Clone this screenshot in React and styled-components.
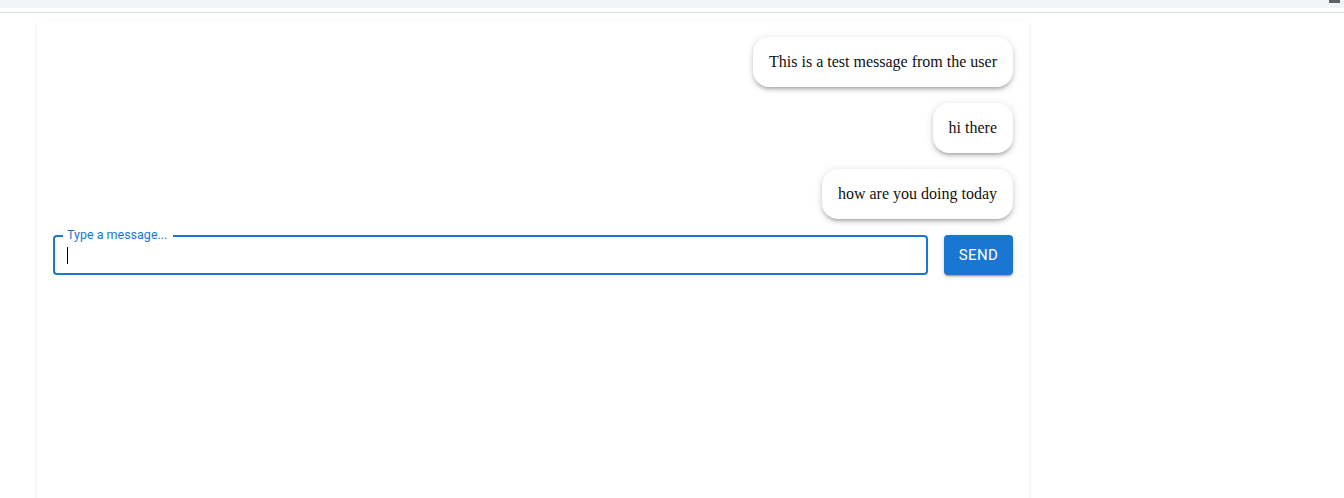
import React from "react";
import styled, { createGlobalStyle } from "styled-components";

const GlobalStyle = createGlobalStyle`
  html, body {
    margin: 0;
    padding: 0;
    background: #fff;
  }
  body {
    font-family: "Liberation Serif", "Times New Roman", serif;
  }
`;

const messages = [
  "This is a test message from the user",
  "hi there",
  "how are you doing today",
];

export default function App() {
  return (
    <>
      <GlobalStyle />
      <TopStrip>
        <StripMark />
      </TopStrip>
      <Divider />
      <Page>
        <ChatCard>
          <MessageList>
            {messages.map((m) => (
              <Bubble key={m}>{m}</Bubble>
            ))}
          </MessageList>
          <Composer>
            <Field>
              <FieldLabel>Type a message...</FieldLabel>
              <FieldInput aria-label="Type a message..." />
              <Caret />
            </Field>
            <SendButton>Send</SendButton>
          </Composer>
        </ChatCard>
      </Page>
    </>
  );
}

const TopStrip = styled.div`
  height: 8px;
  background: #f1f3f4;
  position: relative;
`;

const StripMark = styled.span`
  position: absolute;
  right: 4px;
  top: 0;
  width: 11px;
  height: 3px;
  background: #5f6368;
`;

const Divider = styled.div`
  margin-top: 4px;
  height: 1px;
  background: #dadce0;
`;

const Page = styled.main`
  padding: 8px 0 0 37px;
`;

const ChatCard = styled.section`
  width: 992px;
  min-height: 500px;
  box-sizing: border-box;
  padding: 16px;
  border-radius: 4px;
  background: #fff;
  box-shadow: 0 2px 1px -1px rgba(0, 0, 0, 0.12), 0 1px 1px 0 rgba(0, 0, 0, 0.08),
    0 1px 3px 0 rgba(0, 0, 0, 0.1);
`;

const MessageList = styled.div`
  display: flex;
  flex-direction: column;
  align-items: flex-end;
  gap: 16px;
`;

const Bubble = styled.div`
  padding: 16px;
  border-radius: 16px;
  background: #fff;
  color: #111;
  font-size: 16px;
  line-height: 18px;
  box-shadow: 0 3px 3px -2px rgba(0, 0, 0, 0.2), 0 3px 4px 0 rgba(0, 0, 0, 0.14),
    0 1px 8px 0 rgba(0, 0, 0, 0.12);
`;

const Composer = styled.div`
  display: flex;
  gap: 16px;
  margin-top: 16px;
  align-items: stretch;
`;

const Field = styled.label`
  flex: 1;
  position: relative;
  height: 40px;
  box-sizing: border-box;
  border: 2px solid #1976d2;
  border-radius: 4px;
  display: flex;
  align-items: center;
`;

const FieldLabel = styled.span`
  position: absolute;
  left: 8px;
  top: -9px;
  padding: 0 6px 0 4px;
  background: #fff;
  color: #1976d2;
  font-family: Roboto, "Liberation Sans", Arial, sans-serif;
  font-size: 12.5px;
  line-height: 14px;
`;

const FieldInput = styled.input`
  flex: 1;
  border: none;
  outline: none;
  background: transparent;
  padding: 0 12px;
  height: 100%;
  font-family: Roboto, "Liberation Sans", Arial, sans-serif;
  font-size: 16px;
  caret-color: transparent;
`;

const Caret = styled.span`
  position: absolute;
  left: 12px;
  top: 10px;
  width: 1px;
  height: 17px;
  background: #000;
`;

const SendButton = styled.button`
  width: 69px;
  border: none;
  border-radius: 4px;
  background: #1976d2;
  color: #fff;
  font-family: Roboto, "Liberation Sans", Arial, sans-serif;
  font-size: 15px;
  font-weight: 400;
  letter-spacing: 0.4px;
  text-transform: uppercase;
  cursor: pointer;
  box-shadow: 0 3px 1px -2px rgba(0, 0, 0, 0.2), 0 2px 2px 0 rgba(0, 0, 0, 0.14),
    0 1px 5px 0 rgba(0, 0, 0, 0.12);
`;
